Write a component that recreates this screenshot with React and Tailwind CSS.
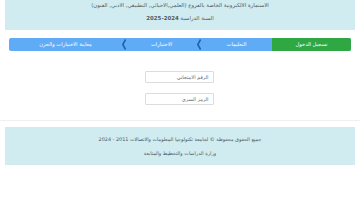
import React from 'react';

const tabs = [
  { label: 'تسجيل الدخول', active: true, w: 'w-[79px]' },
  { label: 'التعليمات', active: false, w: 'w-[75px]' },
  { label: 'الاختيارات', active: false, w: 'w-[75px]' },
  { label: 'معاينة الاختيارات والخزن', active: false, w: 'flex-1' },
];

function Chevron() {
  return (
    <svg width="4" height="11" viewBox="0 0 4 11" className="shrink-0">
      <path d="M3.6 0.5 L0.8 5.5 L3.6 10.5" fill="none" stroke="#1d63b0" strokeWidth="1.6" />
    </svg>
  );
}

export default function App() {
  return (
    <div dir="rtl" className="w-[360px] h-[200px] bg-white overflow-hidden" style={{ fontFamily: '"DejaVu Sans", sans-serif' }}>
      {/* Header */}
      <div className="mx-[5px] h-[31px] bg-[#d1ecf1] flex flex-col items-center text-[#4f585c] text-[5.4px] leading-[13px] -mt-[1px]">
        <p>الاستمارة الالكترونية الخاصة بالفروع (العلمي,الاحيائي, التطبيقي, الادبي, الفنون)</p>
        <p>
          السنة الدراسية <span className="font-bold">2024-2025</span>
        </p>
      </div>

      {/* Steps */}
      <div className="mt-[8px] mx-[9px] h-[13px] flex rounded-[2px] overflow-hidden bg-[#5fabf6]">
        {tabs.map((t, i) => (
          <div key={i} className={`${t.w} flex items-center ${t.active ? 'bg-[#2fa844]' : ''}`}>
            <div className="flex-1 text-center text-white text-[5.2px]">{t.label}</div>
            {!t.active && i < tabs.length - 1 && <Chevron />}
          </div>
        ))}
      </div>

      {/* Login form */}
      <div className="mt-[20px] flex flex-col items-center gap-[10px]">
        <input
          placeholder="الرقم الامتحاني"
          className="w-[69px] h-[12px] border border-[#dcdcdc] rounded-[1px] px-[4px] text-[5px] placeholder:text-[#666] outline-none -translate-x-[1px]"
        />
        <input
          placeholder="الرمز السري"
          className="w-[69px] h-[12px] border border-[#dcdcdc] rounded-[1px] px-[4px] text-[5px] placeholder:text-[#666] outline-none -translate-x-[1px]"
        />
      </div>

      <div className="mt-[15px] h-px bg-[#f0f0f0]" />

      {/* Footer */}
      <div className="mt-[6px] mx-[5px] h-[38px] bg-[#d1ecf1] flex flex-col items-center justify-center text-[#4f585c] text-[4.9px] leading-[14px]">
        <p>جميع الحقوق محفوظة © لجامعة تكنولوجيا المعلومات والاتصالات 2011 - 2024</p>
        <p>وزارة الدراسات والتخطيط والمتابعة</p>
      </div>
    </div>
  );
}
